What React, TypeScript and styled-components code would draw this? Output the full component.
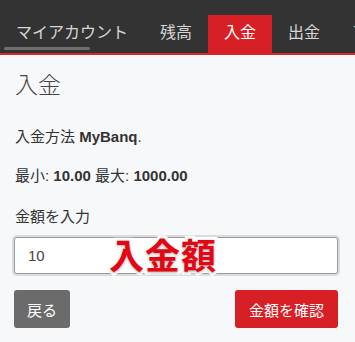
import styled, { createGlobalStyle } from 'styled-components';

const GlobalStyle = createGlobalStyle`
  html, body {
    margin: 0;
    padding: 0;
    background: #f7f8fa;
  }

  body {
    font-family: 'Liberation Sans', 'Noto Sans CJK JP', sans-serif;
    color: #333;
    width: 355px;
    height: 342px;
    overflow: hidden;
  }
`;

const Page = styled.div`
  display: flex;
  flex-direction: column;
  width: 355px;
  height: 342px;
  background: #f7f8fa;
`;

const Nav = styled.nav`
  background-color: #333333;
  border-bottom: 2px solid #d7262c;
  display: flex;
  align-items: flex-end;
  height: 53px;
  overflow: hidden;
  white-space: nowrap;
`;

const Tab = styled.div<{ active?: boolean }>`
  background-color: ${({ active }) => (active ? '#d71f26' : 'transparent')};
  color: ${({ active }) => (active ? '#ffffff' : '#d6d6d6')};
  flex-shrink: 0;
  font-size: 16px;
  height: 38px;
  line-height: 36px;
  padding: 0 16px;
  position: relative;
`;

const ScrollThumb = styled.span`
  background-color: #6f6f6f;
  border-radius: 2px;
  bottom: 3px;
  height: 3px;
  left: 4px;
  position: absolute;
  width: 86px;
`;

const Content = styled.main`
  display: flex;
  flex-direction: column;
  padding: 14px 17px 0 14px;
`;

const Title = styled.h1`
  color: #444;
  font-size: 23px;
  font-weight: 300;
  line-height: 32px;
  margin: 0 0 26px 1px;
`;

const Text = styled.p`
  font-size: 15px;
  line-height: 20px;
  margin: 0 0 19px 1px;

  b {
    font-weight: 700;
  }
`;

const Label = styled.label`
  font-size: 15px;
  line-height: 20px;
  margin: 2px 0 10px 1px;
`;

const InputWrap = styled.div`
  position: relative;
`;

const AmountInput = styled.input`
  background: #fff;
  border: 1px solid #9a9a9a;
  border-radius: 3px;
  box-shadow: 0 0 0 2px #dcdcdc;
  box-sizing: border-box;
  color: #444;
  font-family: inherit;
  font-size: 15px;
  height: 37px;
  outline: none;
  padding: 0 13px;
  width: 100%;
`;

const Stamp = styled.span`
  color: #e30613;
  font-family: 'Noto Sans CJK JP', sans-serif;
  font-size: 35px;
  font-weight: 700;
  left: 95px;
  letter-spacing: 1px;
  line-height: 1;
  pointer-events: none;
  position: absolute;
  text-shadow: 0 1px 3px rgba(0, 0, 0, 0.35);
  top: -1px;
  -webkit-text-stroke: 6px #fff;
  paint-order: stroke fill;
`;

const Actions = styled.div`
  display: flex;
  justify-content: space-between;
  margin-top: 16px;
`;

const Button = styled.button<{ primary?: boolean }>`
  background-color: ${({ primary }) => (primary ? '#d71f26' : '#6b6b6b')};
  border: none;
  border-radius: 3px;
  color: #fff;
  font-family: inherit;
  font-size: 15px;
  height: 38px;
  padding: 0 ${({ primary }) => (primary ? '14px' : '13px')};
`;

const App = () => {
  return (
    <Page>
      <GlobalStyle />
      <Nav>
        <Tab>
          マイアカウント
          <ScrollThumb />
        </Tab>
        <Tab>残高</Tab>
        <Tab active>入金</Tab>
        <Tab>出金</Tab>
        <Tab>アカウント</Tab>
      </Nav>
      <Content>
        <Title>入金</Title>
        <Text>
          入金方法 <b>MyBanq</b>.
        </Text>
        <Text>
          最小: <b>10.00</b> 最大: <b>1000.00</b>
        </Text>
        <Label htmlFor="amount">金額を入力</Label>
        <InputWrap>
          <AmountInput id="amount" defaultValue="10" />
          <Stamp>入金額</Stamp>
        </InputWrap>
        <Actions>
          <Button>戻る</Button>
          <Button primary>金額を確認</Button>
        </Actions>
      </Content>
    </Page>
  );
};

export default App;
